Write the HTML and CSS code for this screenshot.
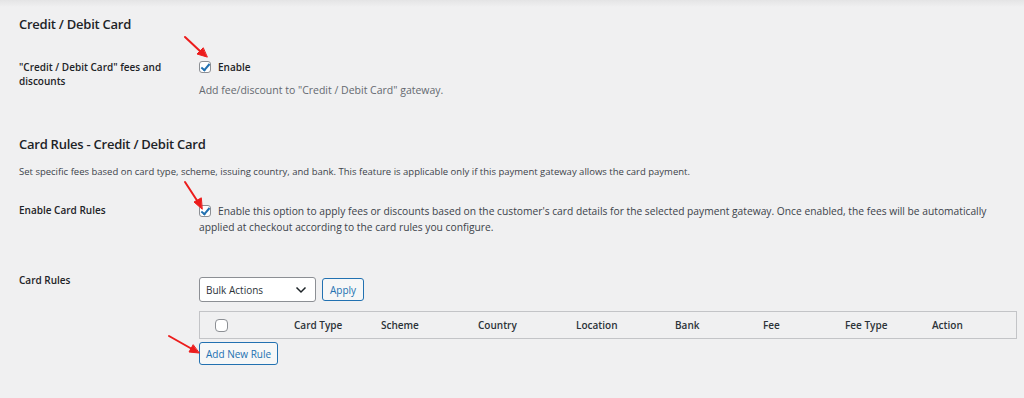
FILE: index.html
```html
<!DOCTYPE html>
<html lang="en">
<head>
  <meta charset="UTF-8">
  <title>Card Fees Settings</title>
  <link rel="stylesheet" href="styles.css">
</head>
<body>
  <div class="wrap">
    <h2 class="title">Credit / Debit Card</h2>
    <div class="form-row first">
      <div class="row-label">"Credit / Debit Card" fees and discounts</div>
      <div class="row-field">
        <label class="check"><span class="box checked"></span>Enable</label>
        <p class="description">Add fee/discount to "Credit / Debit Card" gateway.</p>
      </div>
    </div>

    <h2 class="title second">Card Rules - Credit / Debit Card</h2>
    <p class="section-desc">Set specific fees based on card type, scheme, issuing country, and bank. This feature is applicable only if this payment gateway allows the card payment.</p>

    <div class="form-row rules-toggle">
      <div class="row-label">Enable Card Rules</div>
      <div class="row-field long-text">
        <span class="box checked inline"></span>Enable this option to apply fees or discounts based on the customer's card details for the selected payment gateway. Once enabled, the fees will be automatically applied at checkout according to the card rules you configure.
      </div>
    </div>

    <div class="form-row rules">
      <div class="row-label">Card Rules</div>
      <div class="row-field">
        <div class="bulk">
          <div class="select">Bulk Actions
            <svg class="chevron" width="12" height="8" viewBox="0 0 12 8"><path d="M1.5 1.5 L6 6 L10.5 1.5" fill="none" stroke="#1d2327" stroke-width="1.5"/></svg>
          </div>
          <button class="btn">Apply</button>
        </div>
        <div class="rules-table">
          <div class="cell cb"><span class="box round"></span></div>
          <div class="cell">Card Type</div>
          <div class="cell">Scheme</div>
          <div class="cell">Country</div>
          <div class="cell">Location</div>
          <div class="cell">Bank</div>
          <div class="cell">Fee</div>
          <div class="cell">Fee Type</div>
          <div class="cell">Action</div>
        </div>
        <button class="btn add">Add New Rule</button>
      </div>
    </div>

    <svg class="arrows" width="1024" height="398" viewBox="0 0 1024 398">
      <g stroke="#ec1c1c" stroke-width="2" fill="#ec1c1c" stroke-linecap="round">
        <line x1="185" y1="37" x2="201" y2="52"/>
        <polygon points="207,57 197,54 203,48" stroke-width="1"/>
        <line x1="185" y1="182" x2="198" y2="202"/>
        <polygon points="202,209 194,202 201,198" stroke-width="1"/>
        <line x1="169" y1="336" x2="192" y2="349"/>
        <polygon points="199,353 189,352 193,345" stroke-width="1"/>
      </g>
    </svg>
  </div>
</body>
</html>
```

FILE: styles.css
```css
body {
  margin: 0;
  background: linear-gradient(#e4e4e5 0, #f0f0f1 7px) #f0f0f1;
  font-family: "Open Sans", "Noto Sans", sans-serif;
  font-size: 10px;
  color: #1d2327;
  min-height: 398px;
}
.wrap {
  position: relative;
  padding: 15px 7px 0 19px;
  height: 383px;
}
.title {
  margin: 0;
  font-size: 13px;
  letter-spacing: -0.25px;
  line-height: 18px;
  font-weight: 600;
  color: #1d2327;
}
.title.second {
  margin-top: 38px;
}
.form-row {
  display: flex;
}
.row-label {
  width: 180px;
  flex: none;
  font-weight: 600;
  line-height: 14px;
  padding-right: 30px;
  box-sizing: border-box;
}
.row-field {
  flex: 1;
}
.first {
  margin-top: 27px;
}
.check {
  display: flex;
  align-items: center;
  line-height: 14px;
  font-weight: 600;
}
.box {
  width: 12px;
  height: 12px;
  border: 1px solid #8c8f94;
  border-radius: 3px;
  background: #fff;
  box-sizing: border-box;
  display: inline-block;
  margin-right: 7px;
  position: relative;
}
.box.checked::after {
  content: "";
  position: absolute;
  left: 3px;
  top: 0px;
  width: 3px;
  height: 7px;
  border: solid #2271b1;
  border-width: 0 2px 2px 0;
  transform: rotate(40deg);
}
.box.inline {
  vertical-align: -2px;
}
.description {
  margin: 9px 0 0;
  line-height: 14px;
  font-size: 10.5px;
  color: #646970;
}
.section-desc {
  margin: 12px 0 0;
  line-height: 14px;
  font-size: 9.5px;
  color: #3c434a;
}
.rules-toggle {
  margin-top: 24px;
}
.long-text {
  flex: none;
  width: 795px;
  font-size: 10.25px;
  line-height: 16px;
  color: #3c434a;
}
.rules {
  margin-top: 38px;
}
.bulk {
  display: flex;
  align-items: center;
  gap: 6px;
  margin-top: 4px;
}
.select {
  width: 117px;
  height: 25px;
  box-sizing: border-box;
  border: 1px solid #8c8f94;
  border-radius: 3px;
  background: #fff;
  padding-left: 6px;
  display: flex;
  align-items: center;
  justify-content: space-between;
  padding-right: 8px;
  color: #2c3338;
}
.btn {
  font-family: inherit;
  font-size: 10px;
  color: #2271b1;
  background: #f6f7f7;
  border: 1px solid #2271b1;
  border-radius: 3px;
  height: 23px;
  padding: 0 7px;
  cursor: pointer;
}
.rules-table {
  margin-top: 9px;
  height: 28px;
  box-sizing: border-box;
  border: 1px solid #c3c4c7;
  display: grid;
  grid-template-columns: 86px 87px 97px 98px 99px 88px 82px 87px 1fr;
  align-items: center;
  font-weight: 600;
  color: #2c3338;
}
.cell {
  padding-left: 8px;
}
.cell.cb {
  padding-left: 15px;
  display: flex;
}
.box.round {
  width: 13px;
  height: 13px;
  border-radius: 4px;
  margin: 0;
}
.add {
  margin-top: 3px;
  padding: 0 6px;
}
.arrows {
  position: absolute;
  left: 0;
  top: 0;
  pointer-events: none;
}
```
